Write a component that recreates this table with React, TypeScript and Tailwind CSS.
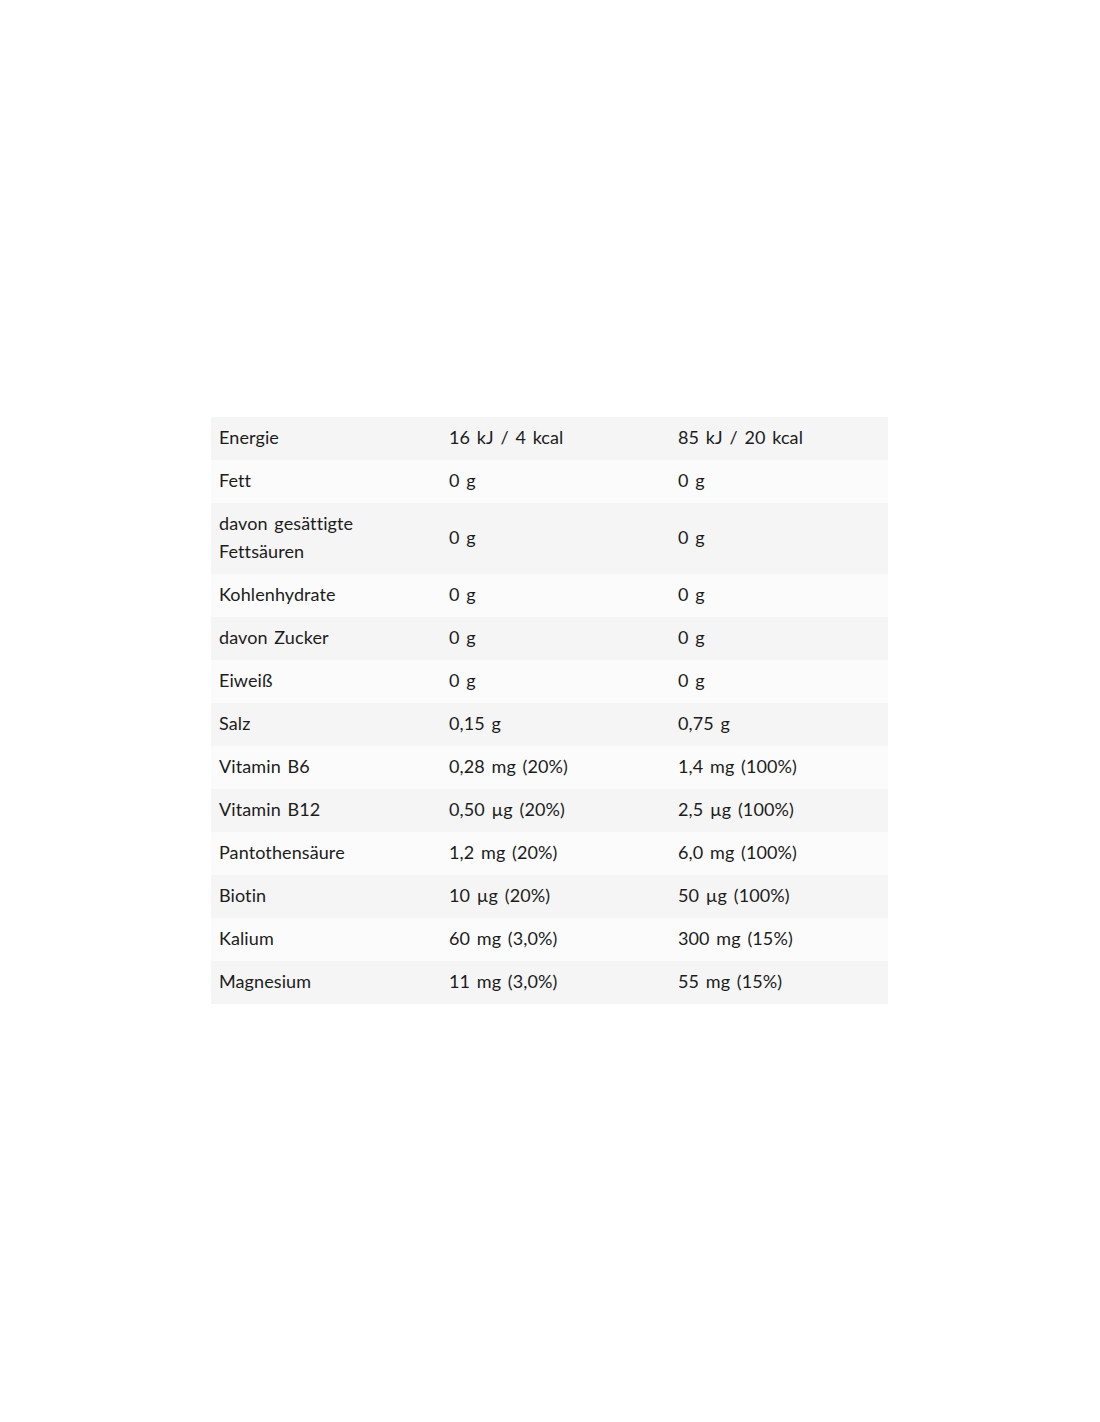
const rows: [string, string, string][] = [
  ["Energie", "16 kJ / 4 kcal", "85 kJ / 20 kcal"],
  ["Fett", "0 g", "0 g"],
  ["davon gesättigte Fettsäuren", "0 g", "0 g"],
  ["Kohlenhydrate", "0 g", "0 g"],
  ["davon Zucker", "0 g", "0 g"],
  ["Eiweiß", "0 g", "0 g"],
  ["Salz", "0,15 g", "0,75 g"],
  ["Vitamin B6", "0,28 mg (20%)", "1,4 mg (100%)"],
  ["Vitamin B12", "0,50 µg (20%)", "2,5 µg (100%)"],
  ["Pantothensäure", "1,2 mg (20%)", "6,0 mg (100%)"],
  ["Biotin", "10 µg (20%)", "50 µg (100%)"],
  ["Kalium", "60 mg (3,0%)", "300 mg (15%)"],
  ["Magnesium", "11 mg (3,0%)", "55 mg (15%)"],
];

export default function App() {
  return (
    <div className="min-h-[1422px] w-full bg-white pt-[417px] font-['Lato',sans-serif] text-[18px] leading-[28px] tracking-[0.1px] [word-spacing:2px] text-[#1c1c1c]">
      <table className="ml-[211px] w-[677px] table-fixed border-collapse">
        <colgroup>
          <col className="w-[230px]" />
          <col className="w-[229px]" />
          <col className="w-[218px]" />
        </colgroup>
        <tbody>
          {rows.map(([name, per100, perPortion], i) => (
            <tr key={name} className={i % 2 === 0 ? "bg-[#f5f5f5]" : "bg-[#fbfbfb]"}>
              <td className="pl-2 pr-10 pt-[6px] pb-[9px] align-middle">{name}</td>
              <td className="pl-2 pt-[6px] pb-[9px] align-middle">{per100}</td>
              <td className="pl-2 pt-[6px] pb-[9px] align-middle">{perPortion}</td>
            </tr>
          ))}
        </tbody>
      </table>
    </div>
  );
}
